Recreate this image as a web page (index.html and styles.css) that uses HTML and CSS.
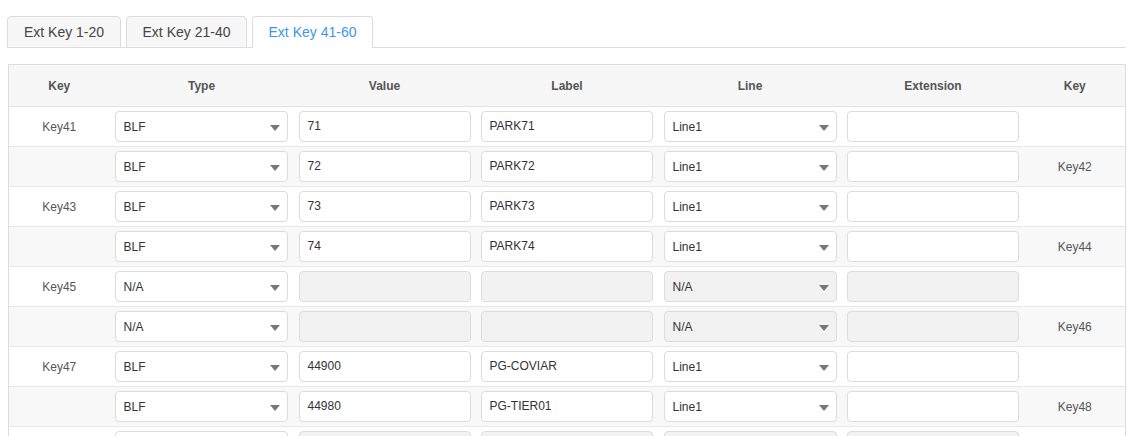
FILE: index.html
```html
<!DOCTYPE html>
<html>
<head>
<meta charset="utf-8">
<link rel="stylesheet" href="styles.css">
</head>
<body>
<div class="page">
  <div class="tabs">
    <div class="tab">Ext Key 1-20</div>
    <div class="tab">Ext Key 21-40</div>
    <div class="tab active">Ext Key 41-60</div>
  </div>
  <table class="grid">
    <colgroup>
      <col class="c-key"><col class="c-type"><col class="c-val"><col class="c-mid"><col class="c-mid"><col class="c-mid"><col class="c-key2">
    </colgroup>
    <thead>
      <tr><th>Key</th><th>Type</th><th>Value</th><th>Label</th><th>Line</th><th>Extension</th><th>Key</th></tr>
    </thead>
    <tbody>
      <tr>
        <td class="key">Key41</td>
        <td><div class="sel"><span>BLF</span></div></td>
        <td><div class="inp">71</div></td>
        <td><div class="inp">PARK71</div></td>
        <td><div class="sel"><span>Line1</span></div></td>
        <td><div class="inp"></div></td>
        <td class="key"></td>
      </tr>
      <tr class="alt">
        <td class="key"></td>
        <td><div class="sel"><span>BLF</span></div></td>
        <td><div class="inp">72</div></td>
        <td><div class="inp">PARK72</div></td>
        <td><div class="sel"><span>Line1</span></div></td>
        <td><div class="inp"></div></td>
        <td class="key">Key42</td>
      </tr>
      <tr>
        <td class="key">Key43</td>
        <td><div class="sel"><span>BLF</span></div></td>
        <td><div class="inp">73</div></td>
        <td><div class="inp">PARK73</div></td>
        <td><div class="sel"><span>Line1</span></div></td>
        <td><div class="inp"></div></td>
        <td class="key"></td>
      </tr>
      <tr class="alt">
        <td class="key"></td>
        <td><div class="sel"><span>BLF</span></div></td>
        <td><div class="inp">74</div></td>
        <td><div class="inp">PARK74</div></td>
        <td><div class="sel"><span>Line1</span></div></td>
        <td><div class="inp"></div></td>
        <td class="key">Key44</td>
      </tr>
      <tr>
        <td class="key">Key45</td>
        <td><div class="sel"><span>N/A</span></div></td>
        <td><div class="inp dis"></div></td>
        <td><div class="inp dis"></div></td>
        <td><div class="sel dis"><span>N/A</span></div></td>
        <td><div class="inp dis"></div></td>
        <td class="key"></td>
      </tr>
      <tr class="alt">
        <td class="key"></td>
        <td><div class="sel"><span>N/A</span></div></td>
        <td><div class="inp dis"></div></td>
        <td><div class="inp dis"></div></td>
        <td><div class="sel dis"><span>N/A</span></div></td>
        <td><div class="inp dis"></div></td>
        <td class="key">Key46</td>
      </tr>
      <tr>
        <td class="key">Key47</td>
        <td><div class="sel"><span>BLF</span></div></td>
        <td><div class="inp">44900</div></td>
        <td><div class="inp">PG-COVIAR</div></td>
        <td><div class="sel"><span>Line1</span></div></td>
        <td><div class="inp"></div></td>
        <td class="key"></td>
      </tr>
      <tr class="alt">
        <td class="key"></td>
        <td><div class="sel"><span>BLF</span></div></td>
        <td><div class="inp">44980</div></td>
        <td><div class="inp">PG-TIER01</div></td>
        <td><div class="sel"><span>Line1</span></div></td>
        <td><div class="inp"></div></td>
        <td class="key">Key48</td>
      </tr>
      <tr>
        <td class="key"></td>
        <td><div class="sel"></div></td>
        <td><div class="inp dis"></div></td>
        <td><div class="inp dis"></div></td>
        <td><div class="sel dis"></div></td>
        <td><div class="inp dis"></div></td>
        <td class="key"></td>
      </tr>
    </tbody>
  </table>
</div>
</body>
</html>
```
FILE: styles.css
```css
html, body {
  margin: 0;
  padding: 0;
  background: #fff;
  overflow: hidden;
  height: 436px;
}
body {
  font-family: "Liberation Sans", Arial, sans-serif;
  color: #333;
}
.page {
  padding: 16px 9px 0 7px;
}
.tabs {
  display: flex;
  gap: 5px;
  border-bottom: 1px solid #dcdcdc;
  height: 31px;
}
.tab {
  box-sizing: border-box;
  width: 114px;
  height: 32px;
  border: 1px solid #dcdcdc;
  border-radius: 4px 4px 0 0;
  background: #f7f7f7;
  font-size: 14px;
  line-height: 30px;
  text-align: center;
  color: #444;
}
.tab:nth-child(2), .tab:nth-child(3) {
  width: 121px;
}
.tab.active {
  background: #fff;
  border-bottom-color: #fff;
  color: #3d95ee;
}
.grid {
  margin: 16px 0 0 1px;
  width: 1117px;
  table-layout: fixed;
  border-collapse: collapse;
  border: 1px solid #dcdcdc;
  font-size: 12px;
}
.c-key { width: 101px; }
.c-type { width: 184px; }
.c-val { width: 182px; }
.c-mid { width: 183px; }
.c-key2 { width: 101px; }
.grid th {
  height: 41px;
  padding: 0;
  background: #f7f7f7;
  color: #555;
  font-weight: bold;
  text-align: center;
  border-bottom: 1px solid #e3e3e3;
}
.grid td {
  height: 39px;
  padding: 0 5px;
  border-bottom: 1px solid #e8e8e8;
  vertical-align: middle;
}
.grid tr.alt td {
  background: #f8f8f8;
}
.grid td.key {
  text-align: center;
  color: #555;
  padding: 0;
}
.inp, .sel {
  box-sizing: border-box;
  height: 31px;
  width: 100%;
  border: 1px solid #dcdcdc;
  border-radius: 4px;
  background: #fff;
  padding: 0 8px;
  line-height: 29px;
  color: #333;
  font-size: 12px;
  white-space: nowrap;
  overflow: hidden;
}
.sel {
  position: relative;
  width: 173px;
  line-height: 31px;
}
.inp {
  width: 172px;
}
.sel::after {
  content: "";
  position: absolute;
  right: 7px;
  top: 13px;
  width: 0;
  height: 0;
  border-left: 5px solid transparent;
  border-right: 5px solid transparent;
  border-top: 6px solid #777;
}
.dis {
  background: #f2f2f2;
}
```
